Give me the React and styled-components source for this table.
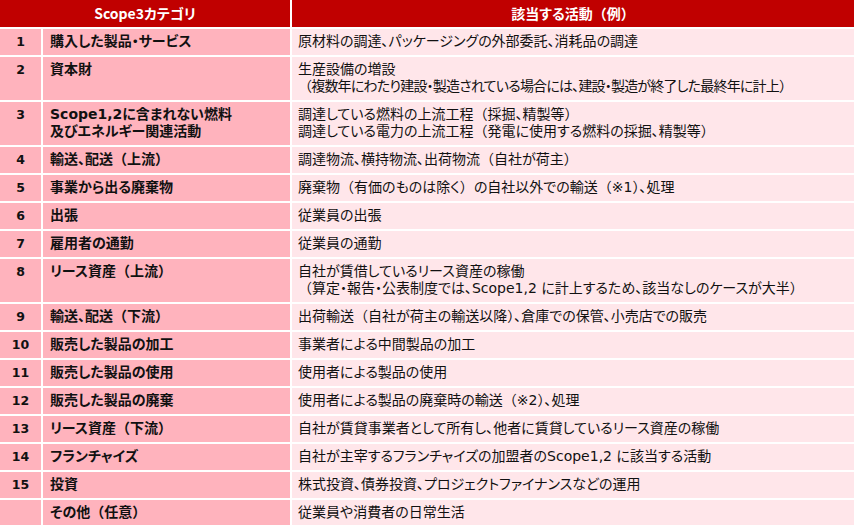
import React from "react";
import styled, { createGlobalStyle } from "styled-components";

const GlobalStyle = createGlobalStyle`
  body {
    margin: 0;
    background: #ffffff;
  }
`;

const rows = [
  { no: "1", cat: ["購入した製品・サービス"], act: ["原材料の調達、パッケージングの外部委託、消耗品の調達"] },
  {
    no: "2",
    cat: ["資本財"],
    act: ["生産設備の増設", "（複数年にわたり建設・製造されている場合には、建設・製造が終了した最終年に計上）"],
    tight: true,
  },
  {
    no: "3",
    cat: ["Scope1,2に含まれない燃料", "及びエネルギー関連活動"],
    act: ["調達している燃料の上流工程（採掘、精製等）", "調達している電力の上流工程（発電に使用する燃料の採掘、精製等）"],
  },
  { no: "4", cat: ["輸送、配送（上流）"], act: ["調達物流、横持物流、出荷物流（自社が荷主）"] },
  { no: "5", cat: ["事業から出る廃棄物"], act: ["廃棄物（有価のものは除く）の自社以外での輸送（※1）、処理"] },
  { no: "6", cat: ["出張"], act: ["従業員の出張"] },
  { no: "7", cat: ["雇用者の通勤"], act: ["従業員の通勤"] },
  {
    no: "8",
    cat: ["リース資産（上流）"],
    act: ["自社が賃借しているリース資産の稼働", "（算定・報告・公表制度では、Scope1,2 に計上するため、該当なしのケースが大半）"],
  },
  { no: "9", cat: ["輸送、配送（下流）"], act: ["出荷輸送（自社が荷主の輸送以降）、倉庫での保管、小売店での販売"] },
  { no: "10", cat: ["販売した製品の加工"], act: ["事業者による中間製品の加工"] },
  { no: "11", cat: ["販売した製品の使用"], act: ["使用者による製品の使用"] },
  { no: "12", cat: ["販売した製品の廃棄"], act: ["使用者による製品の廃棄時の輸送（※2）、処理"] },
  { no: "13", cat: ["リース資産（下流）"], act: ["自社が賃貸事業者として所有し、他者に賃貸しているリース資産の稼働"] },
  { no: "14", cat: ["フランチャイズ"], act: ["自社が主宰するフランチャイズの加盟者のScope1,2 に該当する活動"] },
  { no: "15", cat: ["投資"], act: ["株式投資、債券投資、プロジェクトファイナンスなどの運用"] },
  { no: "", cat: ["その他（任意）"], act: ["従業員や消費者の日常生活"] },
];

// full-width brackets keep their full em box, the rest stays proportional
const withParens = (text) =>
  text.split(/([（）])/).map((part, k) =>
    part === "（" || part === "）" ? <Wide key={k}>{part}</Wide> : part
  );

const ScopeTable = () => {
  return (
    <Table>
      <HeaderRow>
        <HeadCell>Scope3カテゴリ</HeadCell>
        <HeadCell>{withParens("該当する活動（例）")}</HeadCell>
      </HeaderRow>
      {rows.map((r, i) => (
        <Row key={i}>
          <NumCell>{r.no}</NumCell>
          <CatCell>
            {r.cat.map((line, j) => (
              <Line key={j}>{withParens(line)}</Line>
            ))}
          </CatCell>
          <ActCell>
            {r.act.map((line, j) => (
              <Line key={j} $tight={r.tight && j > 0}>
                {withParens(line)}
              </Line>
            ))}
          </ActCell>
        </Row>
      ))}
    </Table>
  );
};

export default function App() {
  return (
    <>
      <GlobalStyle />
      <ScopeTable />
    </>
  );
}

const Table = styled.div`
  width: 854px;
  height: 525px;
  overflow: hidden;
  display: flex;
  flex-direction: column;
  gap: 2px;
  background: #ffffff;
  font-family: "DejaVu Sans", "Noto Sans CJK JP", sans-serif;
  font-feature-settings: "palt";
  font-size: 14px;
  line-height: 17px;
  color: #111111;
`;

const HeaderRow = styled.div`
  display: grid;
  grid-template-columns: 290px 1fr;
  column-gap: 2px;
  height: 27px;
  flex-shrink: 0;
`;

const HeadCell = styled.div`
  background: #c00000;
  color: #ffffff;
  font-family: "Noto Sans CJK JP", sans-serif;
  font-weight: 700;
  display: flex;
  align-items: center;
  justify-content: center;
`;

const Row = styled.div`
  display: grid;
  grid-template-columns: 41px 247px 1fr;
  column-gap: 2px;
  flex-shrink: 0;
`;

const Cell = styled.div`
  padding: 4px 7px 5px;
  min-height: 17px;
`;

const NumCell = styled(Cell)`
  background: #ffb3bd;
  padding-left: 0;
  padding-right: 0;
  text-align: center;
  font-weight: 700;
  font-size: 12.5px;
`;

const CatCell = styled(Cell)`
  background: #ffb3bd;
  font-weight: 700;
`;

const ActCell = styled(Cell)`
  background: #ffe6ea;
  padding-left: 6px;
`;

const Line = styled.div`
  white-space: nowrap;
  letter-spacing: ${(p) => (p.$tight ? "-0.8px" : "normal")};
`;

const Wide = styled.span`
  font-feature-settings: normal;
`;
